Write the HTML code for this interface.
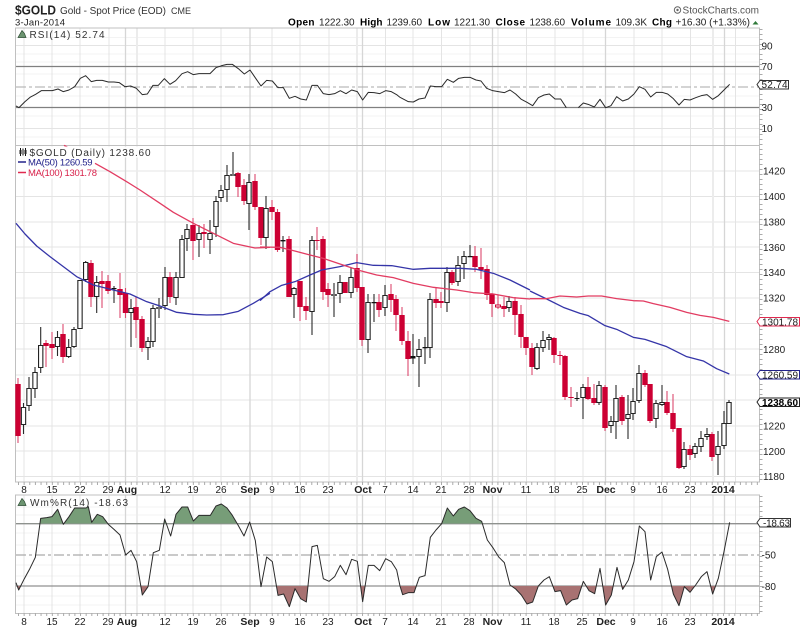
<!DOCTYPE html>
<html>
<head>
<meta charset="utf-8">
<title>$GOLD</title>
<style>
html,body{margin:0;padding:0;background:#fff;width:800px;height:629px;overflow:hidden}
svg{display:block;filter:blur(.3px)}
text{font-family:"Liberation Sans",sans-serif;font-size:10px;fill:#222}
.b{font-weight:bold;fill:#000}
.ax{font-size:10px;fill:#222}
.dt{font-size:10px;fill:#222;text-anchor:middle}
.db{font-size:10.5px;font-weight:bold;fill:#222;text-anchor:middle}
</style>
</head>
<body>
<svg width="800" height="629" viewBox="0 0 800 629" xmlns="http://www.w3.org/2000/svg">
<defs>
<clipPath id="gL"><rect x="0" y="0" width="1200" height="131"/></clipPath>
<clipPath id="rL"><rect x="0" y="318" width="1200" height="120"/></clipPath>
</defs>

<!-- header -->
<text x="15" y="14.5" class="b" style="font-size:13px;fill:#222" textLength="41" lengthAdjust="spacingAndGlyphs">$GOLD</text>
<text x="60" y="14" style="font-size:10px;fill:#333" textLength="106">Gold - Spot Price (EOD)</text>
<text x="171" y="14" style="font-size:9px;fill:#333" textLength="20">CME</text>
<text x="15" y="25.5" style="font-size:9.5px" textLength="50">3-Jan-2014</text>
<text x="288" y="25.5" class="b" textLength="26.5">Open</text>
<text x="319" y="25.5" textLength="35.5">1222.30</text>
<text x="360" y="25.5" class="b" textLength="22.5">High</text>
<text x="386.5" y="25.5" textLength="35.5">1239.60</text>
<text x="428" y="25.5" class="b" textLength="22">Low</text>
<text x="454" y="25.5" textLength="36">1221.30</text>
<text x="495.5" y="25.5" class="b" textLength="29.5">Close</text>
<text x="529.5" y="25.5" textLength="35.5">1238.60</text>
<text x="571" y="25.5" class="b" textLength="40">Volume</text>
<text x="615.5" y="25.5" textLength="31.5">109.3K</text>
<text x="652" y="25.5" class="b" textLength="20">Chg</text>
<text x="675.5" y="25.5" textLength="74.5">+16.30 (+1.33%)</text>
<path d="M752.5 24.5h6l-3-3.5z" fill="#2f7a3a"/>
<circle cx="677.5" cy="10" r="3.2" fill="none" stroke="#666" stroke-width="1"/>
<circle cx="677.5" cy="10" r="1.2" fill="#666"/>
<text x="682.5" y="13.5" style="font-size:10px;fill:#555" textLength="76.5">StockCharts.com</text>

<!-- grid -->
<g fill="none">
<path stroke="#f3f3f3" stroke-width="1" d="M16 37.5H759M16 54H759M16 62H759M16 74H759M16 96H759M16 116H759M16 137H759
M16 507H759M16 515H759M16 533H759M16 545H759M16 565H759M16 576H759M16 596H759M16 605H759"/>
<path stroke="#e4e4e4" stroke-width="1" d="M16 45.5H759M16 128.5H759
M16 171H759M16 196.5H759M16 222H759M16 247H759M16 272.5H759M16 298H759M16 323.5H759M16 349H759M16 375H759M16 400H759M16 426H759M16 451H759M16 476.5H759"/>
<path stroke="#e4e4e4" stroke-width="1" d="M24 28V482M52 28V482M80 28V482M109 28V482M165 28V482M193 28V482M221 28V482M272 28V482M300 28V482M329 28V482M385.5 28V482M413 28V482M441.5 28V482M470 28V482M498 28V482M526.5 28V482M555 28V482M583 28V482M634 28V482M662 28V482M690.5 28V482M735.5 28V482
M24 495V613M52 495V613M80 495V613M109 495V613M165 495V613M193 495V613M221 495V613M272 495V613M300 495V613M329 495V613M385.5 495V613M413 495V613M441.5 495V613M470 495V613M498 495V613M526.5 495V613M555 495V613M583 495V613M634 495V613M662 495V613M690.5 495V613M735.5 495V613"/>
<path stroke="#ececec" stroke-width="2" d="M137 28V482M137 495V613M357 28V482M357 495V613M713 28V482M713 495V613"/>
<path stroke="#d6d6d6" stroke-width="1.3" d="M125.5 28V482M250 28V482M362.5 28V482M492.5 28V482M605.5 28V482M724.5 28V482
M125.5 495V613M250 495V613M362.5 495V613M492.5 495V613M605.5 495V613M724.5 495V613"/>
<!-- panel frames -->
<path stroke="#c0c0c0" stroke-width="1" d="M15.5 28H759.5V482H15.5ZM15.5 145.5H759.5M15.5 495H759.5V613.5H15.5Z"/>
<path stroke="#aaa" stroke-width="3" stroke-dasharray="1 4" d="M761 29V482M761 496V613"/>
<path stroke="#aaa" stroke-width="3" stroke-dasharray="1 4.64" d="M18 483.5H759M18 614.5H759"/>
<!-- RSI levels -->
<path stroke="#808080" stroke-width="1.2" d="M16 66.5H759M16 107.5H759"/>
<path stroke="#aaa" stroke-width="1.1" stroke-dasharray="10 3 3 3" d="M16 87H759"/>
</g>

<!-- RSI line -->
<g fill="none" stroke="#2a2a2a" stroke-width="3" stroke-linejoin="round" transform="scale(.33333)">
<path d="M48 318L57 323L75 305L90 292L107 283L124 272L157 272L174 267L190 275L207 270L224 260L241 235L257 227L274 245L290 241L307 241L325 246L342 246L358 248L375 260L392 258L409 265L427 284L442 282L459 256L475 256L493 236L510 253L527 242L546 221L563 215L580 224L597 221L613 221L630 221L648 203L665 197L681 193L697 193L715 206L733 222L750 210L767 235L783 258L800 241L817 243L834 263L850 263L868 295L885 289L902 297L919 300L936 256L952 256L970 281L987 284L1004 281L1021 272L1038 281L1055 270L1072 275L1088 300L1105 277L1122 278L1139 281L1157 272L1174 275L1190 284L1200 292"/>
</g>
<g fill="none" stroke="#2a2a2a" stroke-width="3" stroke-linejoin="round" transform="translate(400 0) scale(.33333)">
<path d="M0 292L25 305L40 306L57 297L75 294L91 258L108 260L125 260L142 238L160 247L176 235L193 232L210 232L228 240L243 243L260 265L278 272L295 275L313 278L330 270L347 282L364 298L381 307L398 317L415 293L432 285L448 282L465 297L482 297L499 323"/>
<path d="M535 323L550 309L567 314L583 321L600 298L617 323L633 317L650 290L668 303L685 297L702 282L718 260L735 268L752 291L769 277L786 277L803 282L820 296L837 315L853 298L870 300L887 293L904 287L921 284L938 298L955 287L972 270L989 253"/>
</g>

<!-- wicks red -->
<path fill="none" stroke="#dd4a70" stroke-width="1.1" d="M18 378V443M46 340V367M52 332V359M63 324V363M91 260V307M102 271V308M108 275V294M120 273V318M125.5 288V318M136 297V338M142 316V352M170 272V303M193 218V260M204 224V248M238 172V197M244 179V205M255 174V210M261 207V245M272 200V220M277.5 209V252M289 236V297M300 281V321M306 297V320M317 227V250M323 236V300M328 283V307M345 282V293M357 254V292M362 287V346M379 294V317M391 284V312M396 295V331M402 307V345M408 331V376M436 287V308M441 292V308M452 270V285M475 246V272M481 248V279M487 265V300M492 293V317M498 295V309M504 297V317M515 297V335M521 305V348M526 337V355M532 343V375M554 337V363M560 351V365M565 355V400M571 387V407M588 377V400M594 384V405M605 385V431M622 395V425M645 370V387M650 384V423M667 391V415M673 394V432M679 428V469M690 445V460M712 432V461"/>
<!-- wicks black -->
<path fill="none" stroke="#2a2a2a" stroke-width="1.1" d="M23.5 403V434M29 377V411M35 367V398M40.7 327V373M57.5 331V356M68.7 339V358M74 327V348M85.7 261V282M96.7 276V313M114 286V303M131 299V347M148 337V360M153 305V347M159 298V318M165 267V310M176 272V305M182 235V278M187 224V251M199 225V257M210 220V254M216 196V237M221 185V202M227 165V202M233 152V176M249 174V230M266 196V249M283 236V252M294 287V318M312 236V335M334 283V317M340 275V303M351 268V298M368 294V353M374 294V322M385 285V316M413 334V364M419 339V387M425 337V364M430 293V358M447 267V312M458 256V286M464 251V279M470 245V257M509 296V312M537 343V370M543 331V352M549 334V350M577 392V401M583 384V419M599 381V405M611 416V433M616 385V439M628 395V439M633 388V420M639 365V403M656 400V428M662 385V406M684 442V469M695 443V458M701 431V452M707 428V440M718 431V475M724 411V449M729 400V424"/>
<!-- red bodies -->
<path fill="none" stroke="#cc0033" stroke-width="5.4" d="M18 384V436M46 343V346M52 344V348M63 334V357M91 263V297M102 281V284M108 281V291M120 289V295M125.5 293V313M136 307V320M142 319V348M170 277V297M193 225V241M204 232V234M238 173V187M244 185V201M255 181V207M261 207V238M272 207V212M277.5 212V250M289 239V297M300 281V307M306 306V311M317 240V241M323 239V292M328 289V295M345 282V293M357 268V288M362 287V340M379 302V310M391 294V300M396 299V315M402 315V341M408 341V359M436 299V303M441 301V303M452 272V283M475 256V267M481 267V270M487 269V295M492 294V304M504 306V309M515 301V315M521 314V337M526 337V348M532 348V367M554 338V355M560 355V356M565 356V397M571 397V398M588 387V399M594 398V403M605 387V428M622 397V421M645 373V385M650 384V421M667 402V413M673 413V429M679 428V468M690 449V455M712 434V457"/>
<!-- pink hollow -->
<rect x="495.5" y="305" width="5" height="2" fill="#fff" stroke="#cc0033" stroke-width="1"/>
<!-- white bodies outer -->
<path fill="none" stroke="#222" stroke-width="5.4" d="M23.5 407V425M29 388V406M35 372V389M40.7 345V368M57.5 337V347M68.7 347V357M74 329V347M80 280V329M85.7 262V280M96.7 282V297M131 308V313M148 341V348M153 308V342M159 307V309M165 277V306M176 277V298M182 239V278M187 229V239M199 233V240M210 233V240M216 201V227M221 190V198M227 175V190M233 174V176M249 182V204M266 208V238M294 288V295M312 240V312M334 294V296M340 282V294M351 277V293M368 302V340M385 295V308M419 349V357M430 299V348M447 272V303M458 265V282M464 256V264M509 301V308M537 347V369M543 340V348M549 337V340M583 387V398M599 385V403M611 421V426M616 398V422M628 414V419M633 401V414M639 373V401M656 403V419M662 402V405M684 449V467M695 446V454M701 438V447M707 434V437M718 446V455M724 423V446M729 402V424"/>
<!-- white bodies inner -->
<path fill="none" stroke="#fff" stroke-width="3.2" d="M23.5 408V424M29 389V405M35 373V388M40.7 346V367M57.5 338V346M68.7 348V356M74 330V346M80 281V328M85.7 263V279M96.7 283V296M131 309V312M148 342V347M153 309V341M159 307.6V308.4M165 278V305M176 278V297M182 240V277M187 230V238M199 234V239M210 234V239M216 202V226M221 191V197M227 176V189M233 174.6V175.4M249 183V203M266 209V237M294 289V294M312 241V311M334 294.6V295.4M340 283V293M351 278V292M368 303V339M385 296V307M419 350V356M430 300V347M447 273V302M458 266V281M464 257V263M509 302V307M537 348V368M543 341V347M549 338V339M583 388V397M599 386V402M611 422V425M616 399V421M628 415V418M633 402V413M639 374V400M656 404V418M662 403V404M684 450V466M695 447V453M701 439V446M707 435V436M718 447V454M724 424V445M729 403V423"/>
<!-- dashes -->
<path fill="none" stroke="#111" stroke-width="5" d="M114 288V289.3M283 240V241.4M374 302V303.2M413 356V358.5M425 347V348.2M470 256V257.2M577 398V399"/>

<!-- MA lines -->
<g fill="none" stroke="#3535a8" stroke-width="3.9" stroke-linejoin="round">
<path transform="translate(0 140) scale(.33333)" d="M48 250L75 282L110 318L150 350L190 380L230 410L280 435L340 450L390 462L440 485L480 498L530 517L580 523L620 525L670 524L715 514L760 490L810 460"/>
<path transform="translate(260 140) scale(.33333)" d="M0 482L30 455L65 436L105 425L150 405L185 390L240 380L290 368L340 376L395 377L460 388L510 385L600 385L650 388L700 400L750 420L810 450"/>
<path transform="translate(530 250) scale(.33333)" d="M0 123L50 147L100 172L150 190L175 197L225 227L260 238L310 262L345 268L410 290L470 320L520 333L560 356L598 372"/>
</g>
<g fill="none" stroke="#e23c62" stroke-width="3.9" stroke-linejoin="round">
<path transform="translate(0 140) scale(.33333)" d="M285 70L330 95L375 122L420 150L480 190L520 217L580 250L640 280L700 310L765 324L810 322"/>
<path transform="translate(260 140) scale(.33333)" d="M0 321L60 322L100 332L150 345L190 355L240 372L300 392L350 405L400 413L460 430L520 442L590 450L640 458L700 462L760 473L810 477"/>
<path transform="translate(530 250) scale(.33333)" d="M0 146L50 146L90 138L140 141L175 138L215 138L260 146L310 152L340 153L370 161L420 172L470 187L510 196L550 202L598 214"/>
<path transform="translate(0 140) scale(.33333)" d="M192 16L202 21"/>
</g>

<!-- Wm%R levels -->
<path fill="none" stroke="#909090" stroke-width="1.3" d="M16 523.7H759M16 586H759"/>
<path fill="none" stroke="#aaa" stroke-width="1.2" stroke-dasharray="10 3 3 3" d="M16 555H759"/>
<!-- Wm%R fills -->
<g transform="translate(0 480) scale(.33333)">
<path clip-path="url(#gL)" fill="#779d78" d="M48 308L56 330L72 298L90 265L106 232L122 115L140 113L156 110L173 88L190 133L207 110L224 84L241 84L258 84L265 80L275 127L292 103L308 110L325 133L342 148L360 165L377 225L393 211L410 245L427 345L444 320L460 218L478 211L494 117L512 168L528 103L546 81L563 81L580 123L597 106L614 106L631 106L648 78L664 72L681 84L697 106L714 135L732 168L749 126L766 182L783 320L800 231L817 245L834 346L851 342L868 380L885 326L902 356L919 366L936 200L952 196L970 296L987 304L1004 290L1021 256L1038 284L1055 238L1072 244L1088 365L1105 256L1122 256L1139 272L1157 236L1174 245L1190 270L1200 318L1200 131L48 131Z"/>
<path clip-path="url(#rL)" fill="#a87272" d="M48 308L56 330L72 298L90 265L106 232L122 115L140 113L156 110L173 88L190 133L207 110L224 84L241 84L258 84L265 80L275 127L292 103L308 110L325 133L342 148L360 165L377 225L393 211L410 245L427 345L444 320L460 218L478 211L494 117L512 168L528 103L546 81L563 81L580 123L597 106L614 106L631 106L648 78L664 72L681 84L697 106L714 135L732 168L749 126L766 182L783 320L800 231L817 245L834 346L851 342L868 380L885 326L902 356L919 366L936 200L952 196L970 296L987 304L1004 290L1021 256L1038 284L1055 238L1072 244L1088 365L1105 256L1122 256L1139 272L1157 236L1174 245L1190 270L1200 318L1200 318L48 318Z"/>
<path fill="none" stroke="#2a2a2a" stroke-width="3" stroke-linejoin="round" d="M48 308L56 330L72 298L90 265L106 232L122 115L140 113L156 110L173 88L190 133L207 110L224 84L241 84L258 84L265 80L275 127L292 103L308 110L325 133L342 148L360 165L377 225L393 211L410 245L427 345L444 320L460 218L478 211L494 117L512 168L528 103L546 81L563 81L580 123L597 106L614 106L631 106L648 78L664 72L681 84L697 106L714 135L732 168L749 126L766 182L783 320L800 231L817 245L834 346L851 342L868 380L885 326L902 356L919 366L936 200L952 196L970 296L987 304L1004 290L1021 256L1038 284L1055 238L1072 244L1088 365L1105 256L1122 256L1139 272L1157 236L1174 245L1190 270L1200 318"/>
</g>
<g transform="translate(400 480) scale(.33333)">
<path clip-path="url(#gL)" fill="#779d78" d="M0 318L8 344L25 338L42 338L58 292L75 287L91 172L108 150L125 131L142 84L160 108L176 88L193 81L210 92L228 115L245 124L262 180L280 205L297 232L313 248L330 315L347 327L364 345L381 372L398 366L415 318L432 300L448 290L465 335L482 332L499 375L516 360L533 356L550 304L567 332L584 341L600 265L617 375L634 345L651 262L668 328L685 300L702 245L718 138L735 155L752 300L769 230L786 216L803 268L820 342L837 377L853 320L870 337L887 315L904 290L921 275L938 342L955 295L972 215L989 127L989 131L0 131Z"/>
<path clip-path="url(#rL)" fill="#a87272" d="M0 318L8 344L25 338L42 338L58 292L75 287L91 172L108 150L125 131L142 84L160 108L176 88L193 81L210 92L228 115L245 124L262 180L280 205L297 232L313 248L330 315L347 327L364 345L381 372L398 366L415 318L432 300L448 290L465 335L482 332L499 375L516 360L533 356L550 304L567 332L584 341L600 265L617 375L634 345L651 262L668 328L685 300L702 245L718 138L735 155L752 300L769 230L786 216L803 268L820 342L837 377L853 320L870 337L887 315L904 290L921 275L938 342L955 295L972 215L989 127L989 318L0 318Z"/>
<path fill="none" stroke="#2a2a2a" stroke-width="3" stroke-linejoin="round" d="M0 318L8 344L25 338L42 338L58 292L75 287L91 172L108 150L125 131L142 84L160 108L176 88L193 81L210 92L228 115L245 124L262 180L280 205L297 232L313 248L330 315L347 327L364 345L381 372L398 366L415 318L432 300L448 290L465 335L482 332L499 375L516 360L533 356L550 304L567 332L584 341L600 265L617 375L634 345L651 262L668 328L685 300L702 245L718 138L735 155L752 300L769 230L786 216L803 268L820 342L837 377L853 320L870 337L887 315L904 290L921 275L938 342L955 295L972 215L989 127"/>
</g>

<!-- legends -->
<rect x="16.5" y="146.5" width="135" height="11" fill="#fff" opacity=".92"/>
<rect x="16.5" y="157.5" width="78" height="21" fill="#fff" opacity=".92"/>
<path d="M18 37.5l4-7 2.500 3 1.500 4z" fill="#6c9470" stroke="#2a4a30" stroke-width=".7"/>
<text x="29.5" y="38" style="font-size:10px;fill:#333" textLength="75">RSI(14) 52.74</text>
<path d="M20.500 148v8M23 148.500v7M25.500 148v8" stroke="#111" stroke-width="1"/>
<path d="M19.500 150h2v4h-2zM24.500 150h2v4h-2z" fill="#222"/>
<text x="29.5" y="156" style="font-size:10px;fill:#333" textLength="121">$GOLD (Daily) 1238.60</text>
<path d="M18 162H26" stroke="#22228a" stroke-width="1.5"/>
<text x="28" y="165.5" style="font-size:9.5px;fill:#22228a" textLength="64.5">MA(50) 1260.59</text>
<path d="M18 172.5H26" stroke="#e0294f" stroke-width="1.5"/>
<text x="28" y="176" style="font-size:9.5px;fill:#d8214a" textLength="69">MA(100) 1301.78</text>
<path d="M18 505.5l4-7 2.500 3 1.500 4z" fill="#6c9470" stroke="#2a4a30" stroke-width=".7"/>
<text x="30" y="506" style="font-size:10px;fill:#333" textLength="98">Wm%R(14) -18.63</text>

<!-- right axis labels -->
<text x="761.5" y="49.5" class="ax">90</text>
<text x="761.5" y="70" class="ax">70</text>
<text x="761.5" y="111" class="ax">30</text>
<text x="761.5" y="132" class="ax">10</text>
<text x="763" y="174.5" class="ax">1420</text>
<text x="763" y="200" class="ax">1400</text>
<text x="763" y="225.5" class="ax">1380</text>
<text x="763" y="251" class="ax">1360</text>
<text x="763" y="276" class="ax">1340</text>
<text x="763" y="301.5" class="ax">1320</text>
<text x="763" y="353" class="ax">1280</text>
<text x="763" y="429.5" class="ax">1220</text>
<text x="763" y="455" class="ax">1200</text>
<text x="763" y="480" class="ax">1180</text>
<text x="761.5" y="558.5" class="ax">-50</text>
<text x="761.5" y="590" class="ax">-80</text>

<!-- tags -->
<path d="M757 84.500L760 80.500H788.500V89H760Z" fill="#fff" stroke="#333" stroke-width="1"/>
<text x="761.5" y="88" class="ax" textLength="26">52.74</text>
<path d="M757 321.500L760 317.500H799.500V326H760Z" fill="#fff" stroke="#e0294f" stroke-width="1"/>
<text x="762" y="325.5" class="ax" textLength="36">1301.78</text>
<path d="M757 374.500L760 370.500H799.500V379H760Z" fill="#fff" stroke="#22228a" stroke-width="1"/>
<text x="762" y="378.5" class="ax" textLength="36">1260.59</text>
<path d="M757 402L760 398H799.500V406.500H760Z" fill="#fff" stroke="#222" stroke-width="1"/>
<text x="762" y="405.8" class="ax" style="font-weight:bold;fill:#000" textLength="36">1238.60</text>
<path d="M757 522.500L760 518.500H790.500V527H760Z" fill="#fff" stroke="#333" stroke-width="1"/>
<text x="763" y="526.5" class="ax" textLength="27">-18.63</text>

<!-- date axis upper -->
<text x="24" y="493" class="dt">8</text><text x="52" y="493" class="dt">15</text><text x="80" y="493" class="dt">22</text><text x="108" y="493" class="dt">29</text>
<text x="127" y="493" class="db">Aug</text>
<text x="165" y="493" class="dt">12</text><text x="193" y="493" class="dt">19</text><text x="221" y="493" class="dt">26</text>
<text x="250" y="493" class="db">Sep</text>
<text x="272" y="493" class="dt">9</text><text x="300" y="493" class="dt">16</text><text x="328" y="493" class="dt">23</text>
<text x="363" y="493" class="db">Oct</text>
<text x="385" y="493" class="dt">7</text><text x="413" y="493" class="dt">14</text><text x="441" y="493" class="dt">21</text><text x="469" y="493" class="dt">28</text>
<text x="492.5" y="493" class="db">Nov</text>
<text x="526" y="493" class="dt">11</text><text x="554" y="493" class="dt">18</text><text x="582" y="493" class="dt">25</text>
<text x="606" y="493" class="db">Dec</text>
<text x="633" y="493" class="dt">9</text><text x="662" y="493" class="dt">16</text><text x="690" y="493" class="dt">23</text>
<text x="723" y="493" class="db">2014</text>

<!-- date axis lower -->
<text x="24" y="625" class="dt">8</text><text x="52" y="625" class="dt">15</text><text x="80" y="625" class="dt">22</text><text x="108" y="625" class="dt">29</text>
<text x="127" y="625" class="db">Aug</text>
<text x="165" y="625" class="dt">12</text><text x="193" y="625" class="dt">19</text><text x="221" y="625" class="dt">26</text>
<text x="250" y="625" class="db">Sep</text>
<text x="272" y="625" class="dt">9</text><text x="300" y="625" class="dt">16</text><text x="328" y="625" class="dt">23</text>
<text x="363" y="625" class="db">Oct</text>
<text x="385" y="625" class="dt">7</text><text x="413" y="625" class="dt">14</text><text x="441" y="625" class="dt">21</text><text x="469" y="625" class="dt">28</text>
<text x="492.5" y="625" class="db">Nov</text>
<text x="526" y="625" class="dt">11</text><text x="554" y="625" class="dt">18</text><text x="582" y="625" class="dt">25</text>
<text x="606" y="625" class="db">Dec</text>
<text x="633" y="625" class="dt">9</text><text x="662" y="625" class="dt">16</text><text x="690" y="625" class="dt">23</text>
<text x="723" y="625" class="db">2014</text>
</svg>
</body>
</html>
